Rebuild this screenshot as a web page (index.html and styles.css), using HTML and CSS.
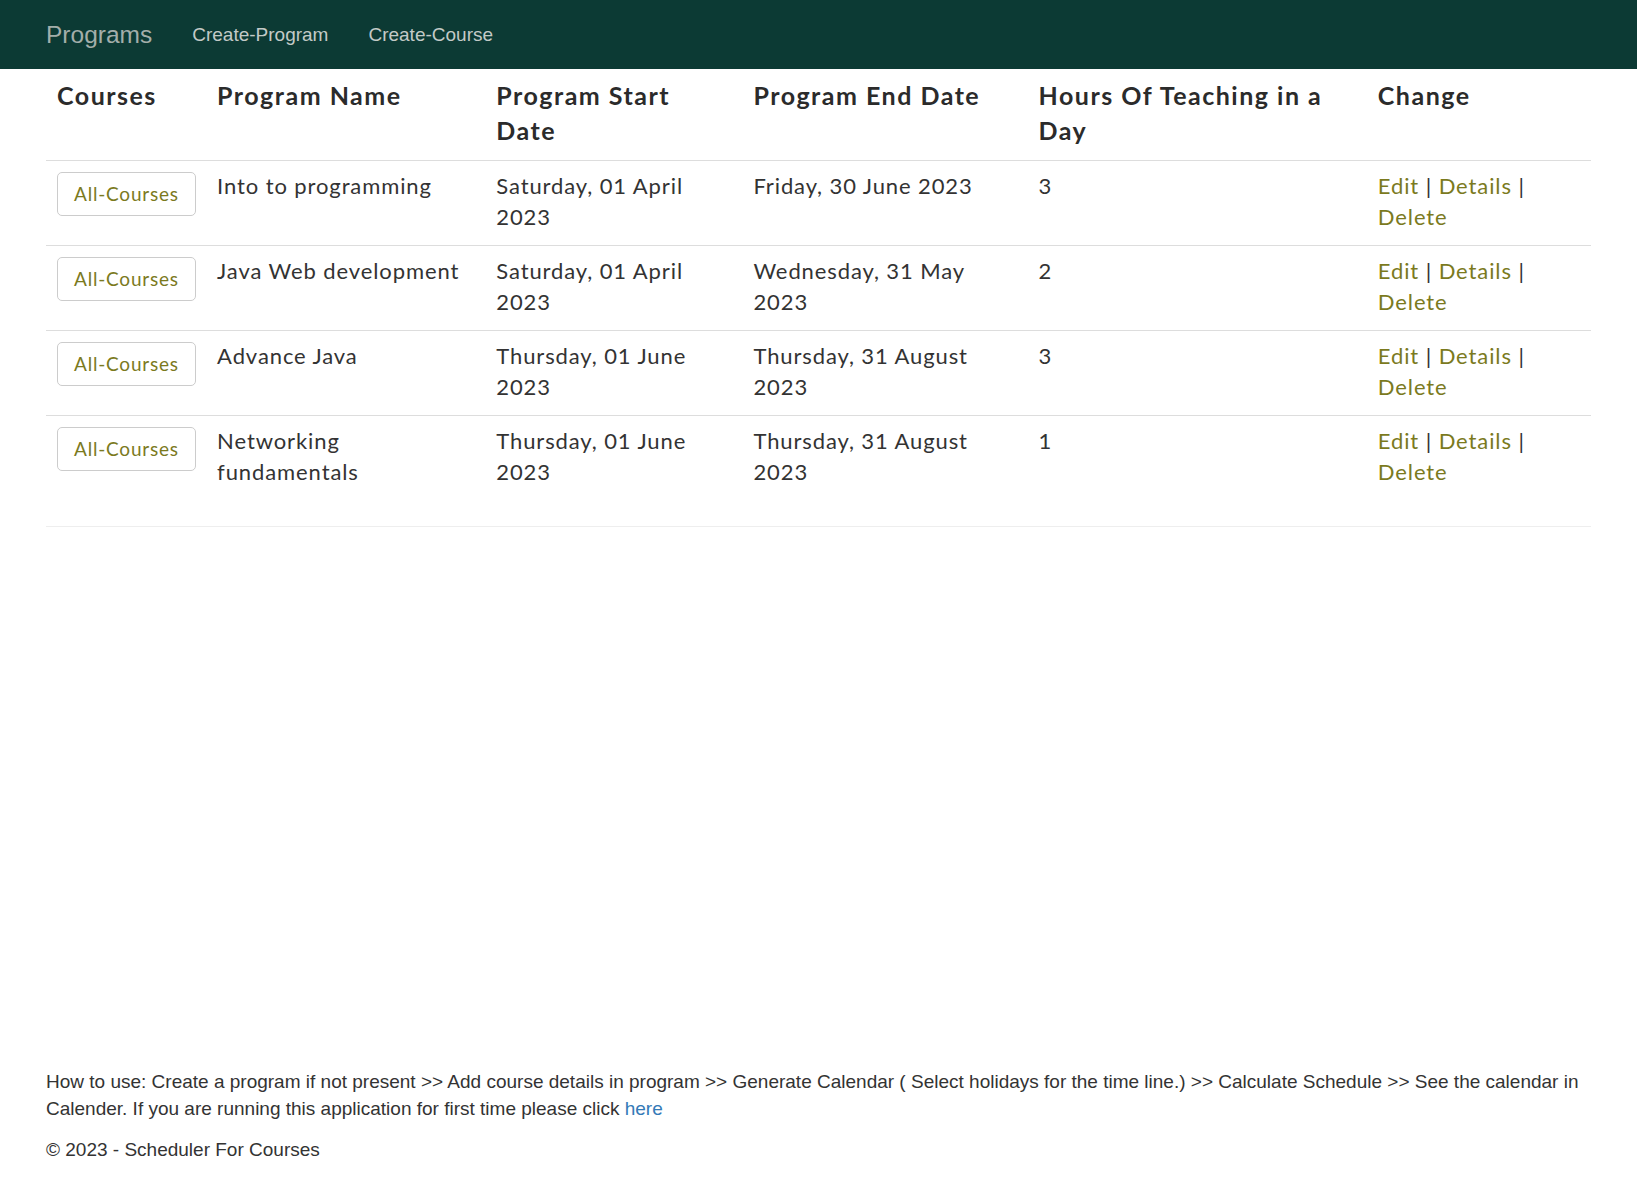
FILE: index.html
```html
<!DOCTYPE html>
<html lang="en">
<head>
<meta charset="utf-8">
<title>Programs</title>
<link rel="stylesheet" href="styles.css">
</head>
<body>
<nav class="navbar">
  <a class="brand" href="#">Programs</a>
  <a class="nav-link" href="#">Create-Program</a>
  <a class="nav-link" href="#">Create-Course</a>
</nav>
<main class="container">
  <table class="table">
    <colgroup>
      <col class="c1"><col class="c2"><col class="c3"><col class="c4"><col class="c5"><col class="c6">
    </colgroup>
    <thead>
      <tr>
        <th>Courses</th>
        <th>Program Name</th>
        <th>Program Start Date</th>
        <th>Program End Date</th>
        <th>Hours Of Teaching in a Day</th>
        <th>Change</th>
      </tr>
    </thead>
    <tbody>
      <tr>
        <td><a class="btn" href="#">All-Courses</a></td>
        <td>Into to programming</td>
        <td>Saturday, 01 April 2023</td>
        <td>Friday, 30 June 2023</td>
        <td>3</td>
        <td><a href="#">Edit</a> | <a href="#">Details</a> | <a href="#">Delete</a></td>
      </tr>
      <tr>
        <td><a class="btn" href="#">All-Courses</a></td>
        <td>Java Web development</td>
        <td>Saturday, 01 April 2023</td>
        <td>Wednesday, 31 May 2023</td>
        <td>2</td>
        <td><a href="#">Edit</a> | <a href="#">Details</a> | <a href="#">Delete</a></td>
      </tr>
      <tr>
        <td><a class="btn" href="#">All-Courses</a></td>
        <td>Advance Java</td>
        <td>Thursday, 01 June 2023</td>
        <td>Thursday, 31 August 2023</td>
        <td>3</td>
        <td><a href="#">Edit</a> | <a href="#">Details</a> | <a href="#">Delete</a></td>
      </tr>
      <tr>
        <td><a class="btn" href="#">All-Courses</a></td>
        <td>Networking fundamentals</td>
        <td>Thursday, 01 June 2023</td>
        <td>Thursday, 31 August 2023</td>
        <td>1</td>
        <td><a href="#">Edit</a> | <a href="#">Details</a> | <a href="#">Delete</a></td>
      </tr>
    </tbody>
  </table>
  <hr class="rule">
</main>
<footer class="footer">
  <p>How to use: Create a program if not present &gt;&gt; Add course details in program &gt;&gt; Generate Calendar ( Select holidays for the time line.) &gt;&gt; Calculate Schedule &gt;&gt; See the calendar in Calender. If you are running this application for first time please click <a class="blue" href="#">here</a></p>
  <p>&copy; 2023 - Scheduler For Courses</p>
</footer>
</body>
</html>
```

FILE: styles.css
```css
* { box-sizing: border-box; }
html, body { margin: 0; padding: 0; }
body {
  min-height: 100vh;
  display: flex;
  flex-direction: column;
  background: #fff;
  color: #333;
  font-family: "Liberation Sans", Arial, sans-serif;
  font-size: 19px;
  line-height: 27px;
}
a { text-decoration: none; }

.navbar {
  height: 69px;
  background: #0c3a34;
  display: flex;
  align-items: center;
  padding-left: 46px;
}
.brand {
  font-size: 24.5px;
  color: #a3aeaa;
  padding-right: 20px;
}
.nav-link {
  font-size: 19px;
  color: #c3cac7;
  padding: 0 20px;
}

.container {
  flex: 1;
  padding: 0 46px;
}

.table {
  width: 100%;
  table-layout: fixed;
  border-collapse: collapse;
  font-family: Lato, "Open Sans", sans-serif;
  font-size: 22px;
  line-height: 31px;
  color: #333;
  margin-bottom: 26px;
  letter-spacing: 0.9px;
}
.c1 { width: 160px; }
.c2 { width: 279px; }
.c3 { width: 257px; }
.c4 { width: 285px; }
.c5 { width: 339px; }
.c6 { width: 224px; }

.table th {
  text-align: left;
  vertical-align: top;
  font-size: 25px;
  font-weight: bold;
  letter-spacing: 1.5px;
  line-height: 34.5px;
  padding: 9px 11px 13px;
  border-bottom: 1px solid #ddd;
  color: #2b2b2b;
}
.table td {
  vertical-align: top;
  padding: 9px 11px 13px;
  border-top: 1px solid #ddd;
}
.table tbody tr:first-child td { border-top: none; }
.table td a { color: #7b7a1e; }

.table td a.btn {
  display: inline-block;
  white-space: nowrap;
  height: 44px;
  line-height: 42px;
  margin-top: 2px;
  padding: 0 16px;
  border: 1px solid #ccc;
  border-radius: 5px;
  font-size: 19px;
  letter-spacing: 0.8px;
  color: #7b7a1e;
  background: #fff;
}

.rule {
  margin: 0;
  border: 0;
  border-top: 1px solid #eee;
}

.footer {
  padding: 0 46px 27px;
}
.footer p { margin: 0 0 13.5px; }
.blue { color: #337ab7; }
```
